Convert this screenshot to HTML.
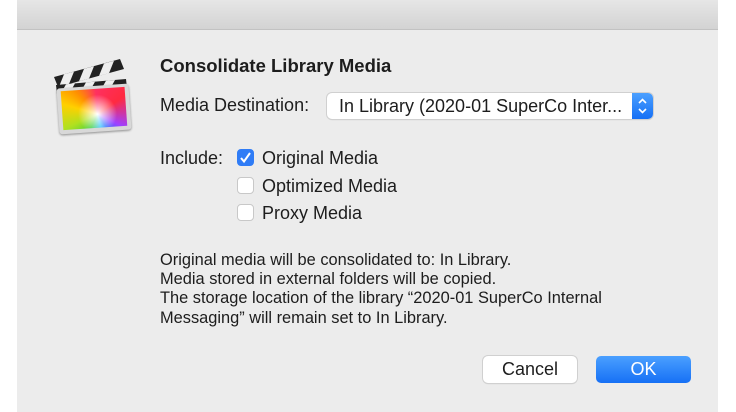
<!DOCTYPE html>
<html><head><style>
body{margin:0;width:736px;height:412px;background:#fff;position:relative;overflow:hidden;font-family:"Liberation Sans",sans-serif;color:#1d1d1d}
.dlg{position:absolute;left:17px;top:0;width:701px;height:412px;background:#ececec}
.tb{position:absolute;left:0;top:0;width:701px;height:29px;background:linear-gradient(#e6e6e6,#d3d3d3);border-bottom:1px solid #c2c2c2}
.t{position:absolute;white-space:nowrap;font-size:18px}
.cb{position:absolute;left:237px;width:17px;height:17px;border-radius:4px;background:#fff;border:1px solid #c8c8c8;box-sizing:border-box}
.btn{position:absolute;top:356px;height:27px;border-radius:5px;font-size:18px;text-align:center;line-height:27px;box-sizing:border-box}
.p{position:absolute;left:160px;font-size:16.4px;white-space:nowrap}
.icon{position:absolute;left:58px;top:86px;width:72px;height:46px;transform:rotate(-4deg);border-radius:3px;background:#d8d8d8;box-shadow:0 1px 2px rgba(0,0,0,.4)}
.col{position:absolute;left:4px;top:3px;width:64px;height:39px;background:radial-gradient(circle at 55% 65%,#fff 0,rgba(255,255,255,.7) 12%,rgba(255,255,255,0) 45%),conic-gradient(from 0deg at 55% 65%,#ff3060,#ff2a40 60deg,#a040ff 120deg,#3070ff 150deg,#20c0ff 170deg,#40d040 210deg,#b0e020 250deg,#ffd000 290deg,#ff9000 320deg,#ff3060)}
</style></head><body>
<div class="dlg"><div class="tb"></div></div>
<svg style="position:absolute;left:50px;top:55px" width="85" height="40" viewBox="0 0 85 40">
<path d="M4 22 L70 4 L74 14 L8 32Z" fill="#222"/>
<path d="M14 19.3 L24 16.6 L19 29 L9 31.7Z M34 13.9 L44 11.2 L39 23.6 L29 26.3Z M54 8.5 L64 5.8 L59 18.2 L49 20.9Z" fill="#eee"/>
<path d="M6 30 L76 24 L77 33 L7 39Z" fill="#222"/>
<path d="M16 29.2 L25 28.4 L20 37.3 L11 38.1Z M36 27.4 L45 26.7 L40 35.6 L31 36.3Z M56 25.7 L65 25 L60 33.9 L51 34.6Z" fill="#eee"/>
</svg>
<div class="icon"><div class="col"></div></div>
<div class="t" style="left:160px;top:55px;font-weight:bold;font-size:18.5px">Consolidate Library Media</div>
<div class="t" style="left:160px;top:95px">Media Destination:</div>
<div style="position:absolute;left:327px;top:93px;width:326px;height:26px;border-radius:5px;background:#fff;box-shadow:0 0 0 1px #d0d0d0,0 1px 1px rgba(0,0,0,.15)"></div>
<div class="t" style="left:339px;top:96px">In Library (2020-01 SuperCo Inter...</div>
<div style="position:absolute;left:632px;top:93px;width:21px;height:26px;border-radius:0 5px 5px 0;background:linear-gradient(#4ba0ff,#1670f5)"></div>
<svg style="position:absolute;left:632px;top:93px" width="21" height="26"><path d="M7 10l3.5-3.5L14 10M7 16l3.5 3.5L14 16" stroke="#fff" stroke-width="1.6" fill="none"/></svg>
<div class="t" style="left:160px;top:148px">Include:</div>
<div class="cb" style="top:149px;background:#2f7cf6;border-color:#2f7cf6"></div>
<svg style="position:absolute;left:237px;top:149px" width="17" height="17"><path d="M4 9l3 3.5L13 4" stroke="#fff" stroke-width="2" fill="none"/></svg>
<div class="t" style="left:262px;top:148px">Original Media</div>
<div class="cb" style="top:177px"></div>
<div class="t" style="left:262px;top:176px">Optimized Media</div>
<div class="cb" style="top:204px"></div>
<div class="t" style="left:262px;top:203px">Proxy Media</div>
<div class="p" style="top:251px">Original media will be consolidated to: In Library.</div>
<div class="p" style="top:270px">Media stored in external folders will be copied.</div>
<div class="p" style="top:289px">The storage location of the library “2020-01 SuperCo Internal</div>
<div class="p" style="top:309px">Messaging” will remain set to In Library.</div>
<div class="btn" style="left:483px;width:94px;background:#fff;box-shadow:0 0 0 1px #d0d0d0,0 1px 1px rgba(0,0,0,.15)">Cancel</div>
<div class="btn" style="left:596px;width:95px;background:linear-gradient(#4ba0ff,#1670f5);color:#fff">OK</div>
</body></html>
